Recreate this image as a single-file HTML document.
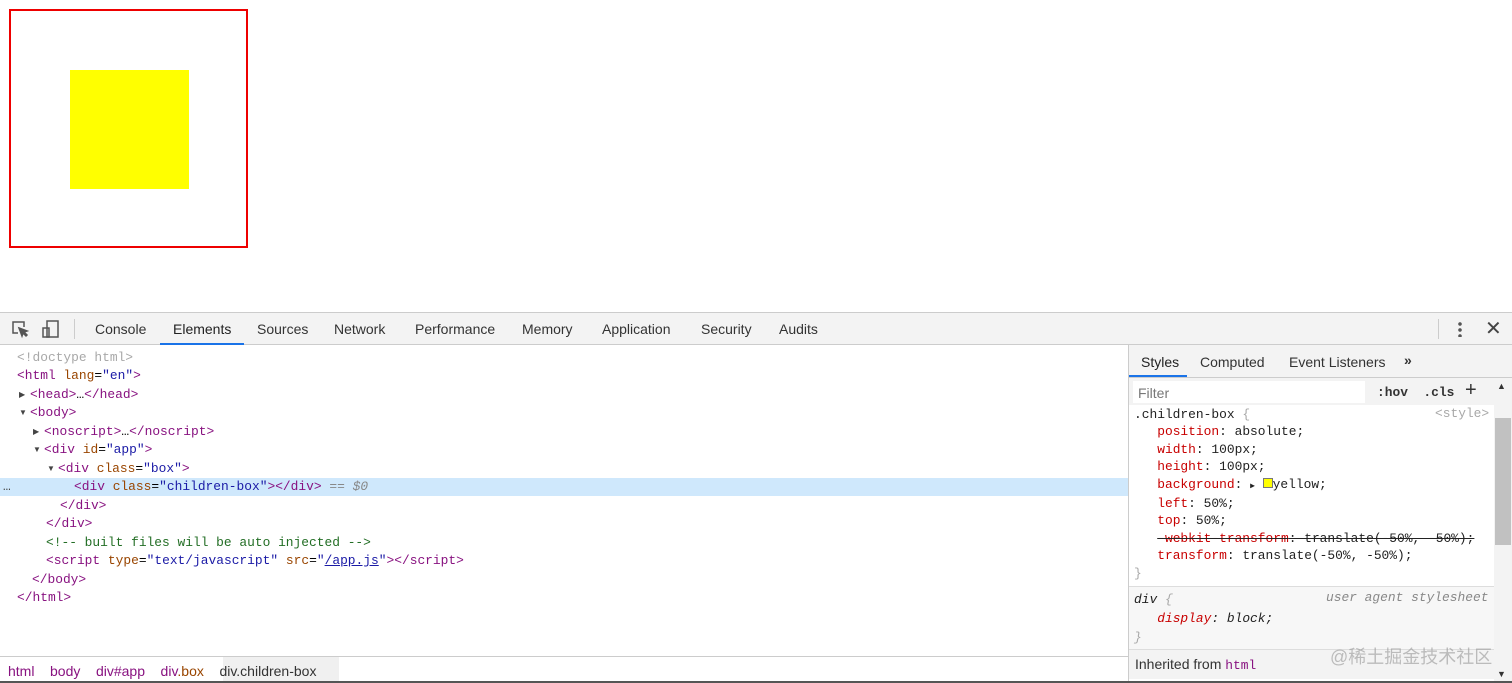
<!DOCTYPE html>
<html><head><style>
*{margin:0;padding:0;box-sizing:border-box}
body{width:1512px;height:683px;overflow:hidden;background:#fff;position:relative;font-family:"Liberation Sans",sans-serif}
.a{position:absolute;white-space:pre}
.m{font-family:"Liberation Mono",monospace;font-size:12.9px}
.l{position:absolute;white-space:pre;font-family:"Liberation Mono",monospace;font-size:12.9px;line-height:18px}
.tr{position:absolute;font-size:8px;color:#444}
.t{color:#881280}.at{color:#994500}.v{color:#1a1aa6}.g{color:#a8a8a8}.c{color:#236e25}
.ui{font-size:14px;color:#333}
.p{color:#c80000}
</style></head><body>
<div class="a" style="left:9px;top:9px;width:239px;height:239px;border:2px solid #e00"></div>
<div class="a" style="left:70px;top:70px;width:119px;height:119px;background:#ff0"></div>

<div class="a" style="left:0;top:312px;width:1512px;height:33px;background:#f3f3f3;border-top:1px solid #ccc;border-bottom:1px solid #ccc"></div>
<svg class="a" style="left:10px;top:319px" width="20" height="20" viewBox="0 0 20 20" fill="none" stroke="#555" stroke-width="1.5"><path d="M8 14H3V3h11v5"/><path d="M9 9l8 3-3 1 3 3-1 1-3-3-1 3z" fill="#555"/></svg>
<svg class="a" style="left:41px;top:319px" width="20" height="20" viewBox="0 0 20 20" fill="none" stroke="#555" stroke-width="1.5"><rect x="6" y="2" width="11" height="16"/><rect x="2" y="9" width="6" height="9"/></svg>
<div class="a" style="left:74px;top:319px;width:1px;height:20px;background:#ccc"></div>
<div class="a ui" style="left:95px;top:321px">Console</div>
<div class="a ui" style="left:173px;top:321px;color:#222">Elements</div>
<div class="a" style="left:160px;top:343px;width:84px;height:2px;background:#1a73e8"></div>
<div class="a ui" style="left:257px;top:321px">Sources</div>
<div class="a ui" style="left:334px;top:321px">Network</div>
<div class="a ui" style="left:415px;top:321px">Performance</div>
<div class="a ui" style="left:522px;top:321px">Memory</div>
<div class="a ui" style="left:602px;top:321px">Application</div>
<div class="a ui" style="left:701px;top:321px">Security</div>
<div class="a ui" style="left:779px;top:321px">Audits</div>
<div class="a" style="left:1438px;top:319px;width:1px;height:20px;background:#ccc"></div>
<div class="a" style="left:1458px;top:321px;width:4px;height:16px;background:radial-gradient(circle,#555 1.6px,transparent 2px) 0 0/4px 6px"></div>
<div class="a" style="left:1485px;top:316px;font-size:20px;color:#444">✕</div>

<div class="a" style="left:0;top:478px;width:1129px;height:18px;background:#cfe8fc"></div>
<div class="a m" style="left:3px;top:479px;color:#444">…</div>
<div class="l g" style="left:17px;top:349px">&lt;!doctype html&gt;</div>
<div class="l" style="left:17px;top:367px"><span class="t">&lt;html</span> <span class="at">lang</span>=<span class="v">"en"</span><span class="t">&gt;</span></div>
<div class="tr" style="left:19px;top:390px">▶</div>
<div class="l" style="left:30px;top:386px"><span class="t">&lt;head&gt;</span>…<span class="t">&lt;/head&gt;</span></div>
<div class="tr" style="left:19px;top:408px">▼</div>
<div class="l" style="left:30px;top:404px"><span class="t">&lt;body&gt;</span></div>
<div class="tr" style="left:33px;top:427px">▶</div>
<div class="l" style="left:44px;top:423px"><span class="t">&lt;noscript&gt;</span>…<span class="t">&lt;/noscript&gt;</span></div>
<div class="tr" style="left:33px;top:445px">▼</div>
<div class="l" style="left:44px;top:441px"><span class="t">&lt;div</span> <span class="at">id</span>=<span class="v">"app"</span><span class="t">&gt;</span></div>
<div class="tr" style="left:47px;top:464px">▼</div>
<div class="l" style="left:58px;top:460px"><span class="t">&lt;div</span> <span class="at">class</span>=<span class="v">"box"</span><span class="t">&gt;</span></div>
<div class="l" style="left:74px;top:478px"><span class="t">&lt;div</span> <span class="at">class</span>=<span class="v">"children-box"</span><span class="t">&gt;&lt;/div&gt;</span> <span style="color:#888">== <i>$0</i></span></div>
<div class="l" style="left:60px;top:497px"><span class="t">&lt;/div&gt;</span></div>
<div class="l" style="left:46px;top:515px"><span class="t">&lt;/div&gt;</span></div>
<div class="l c" style="left:46px;top:534px">&lt;!-- built files will be auto injected --&gt;</div>
<div class="l" style="left:46px;top:552px"><span class="t">&lt;script</span> <span class="at">type</span>=<span class="v">"text/javascript"</span> <span class="at">src</span>=<span class="v">"<u>/app.js</u>"</span><span class="t">&gt;&lt;/script&gt;</span></div>
<div class="l" style="left:32px;top:571px"><span class="t">&lt;/body&gt;</span></div>
<div class="l" style="left:17px;top:589px"><span class="t">&lt;/html&gt;</span></div>

<div class="a" style="left:0;top:656px;width:1129px;height:27px;border-top:1px solid #ccc;background:#fff"></div>
<div class="a" style="left:223px;top:657px;width:116px;height:26px;background:#f0f0f0"></div>
<div class="a" style="left:8px;top:663px;font-size:14px"><span class="t">html</span>    <span class="t">body</span>    <span class="t">div#app</span>    <span class="t">div</span><span class="at">.box</span>    <span style="color:#333">div.children-box</span></div>

<div class="a" style="left:1128px;top:345px;width:1px;height:338px;background:#ccc"></div>
<div class="a" style="left:1129px;top:345px;width:383px;height:33px;background:#f3f3f3;border-bottom:1px solid #ccc"></div>
<div class="a ui" style="left:1141px;top:354px;color:#222">Styles</div>
<div class="a" style="left:1129px;top:375px;width:58px;height:2px;background:#1a73e8"></div>
<div class="a ui" style="left:1200px;top:354px">Computed</div>
<div class="a ui" style="left:1289px;top:354px">Event Listeners</div>
<div class="a ui" style="left:1404px;top:352px;font-weight:bold">»</div>
<div class="a" style="left:1129px;top:378px;width:365px;height:27px;background:#f3f3f3"></div>
<div class="a" style="left:1133px;top:381px;width:232px;height:22px;background:#fff"></div>
<div class="a" style="left:1138px;top:385px;font-size:14px;color:#777">Filter</div>
<div class="a m" style="left:1377px;top:385px;font-weight:bold;color:#333">:hov  .cls</div>
<div class="a" style="left:1465px;top:379px;font-size:20px;color:#333">+</div>
<div class="a" style="left:1494px;top:378px;width:18px;height:305px;background:#f3f3f3"></div>
<div class="a" style="left:1495px;top:418px;width:16px;height:127px;background:#c1c1c1"></div>
<div class="a" style="left:1497px;top:381px;font-size:9px;color:#333">▲</div>
<div class="a" style="left:1497px;top:669px;font-size:9px;color:#333">▼</div>

<div class="a m" style="left:1134px;top:406px;line-height:17.4px;color:#222">.children-box <span class="g">{</span>
   <span class="p">position</span>: absolute;
   <span class="p">width</span>: 100px;
   <span class="p">height</span>: 100px;
   <span class="p">background</span>: <span style="font-size:8px">▶</span> <span style="display:inline-block;width:10px;height:10px;background:#ff0;border:1px solid #777"></span>yellow;
   <span class="p">left</span>: 50%;
   <span class="p">top</span>: 50%;
   <s><span class="p">-webkit-transform</span>: translate(-50%, -50%);</s>
   <span class="p">transform</span>: translate(-50%, -50%);
<span class="g">}</span></div>
<div class="a m g" style="left:1435px;top:406px">&lt;style&gt;</div>
<div class="a" style="left:1129px;top:586px;width:365px;height:1px;background:#ddd"></div>
<div class="a" style="left:1129px;top:587px;width:365px;height:62px;background:#f7f7f7"></div>
<div class="a m" style="left:1134px;top:590px;line-height:19px;font-style:italic;color:#222">div <span class="g">{</span>
   <span class="p">display</span>: block;
<span class="g">}</span></div>
<div class="a m g" style="left:1326px;top:590px;font-style:italic;color:#888">user agent stylesheet</div>
<div class="a" style="left:1129px;top:649px;width:365px;height:30px;background:#f3f3f3;border-top:1px solid #ddd"></div>
<div class="a" style="left:1135px;top:656px;font-size:14px;color:#333">Inherited from <span class="m t">html</span></div>
<div class="a" style="left:1330px;top:643px;font-size:18px;color:rgba(150,150,150,.6);font-family:'Liberation Sans','Noto Sans CJK SC',sans-serif">@稀土掘金技术社区</div>
<div class="a" style="left:0;top:681px;width:1512px;height:2px;background:#555"></div>
</body></html>
